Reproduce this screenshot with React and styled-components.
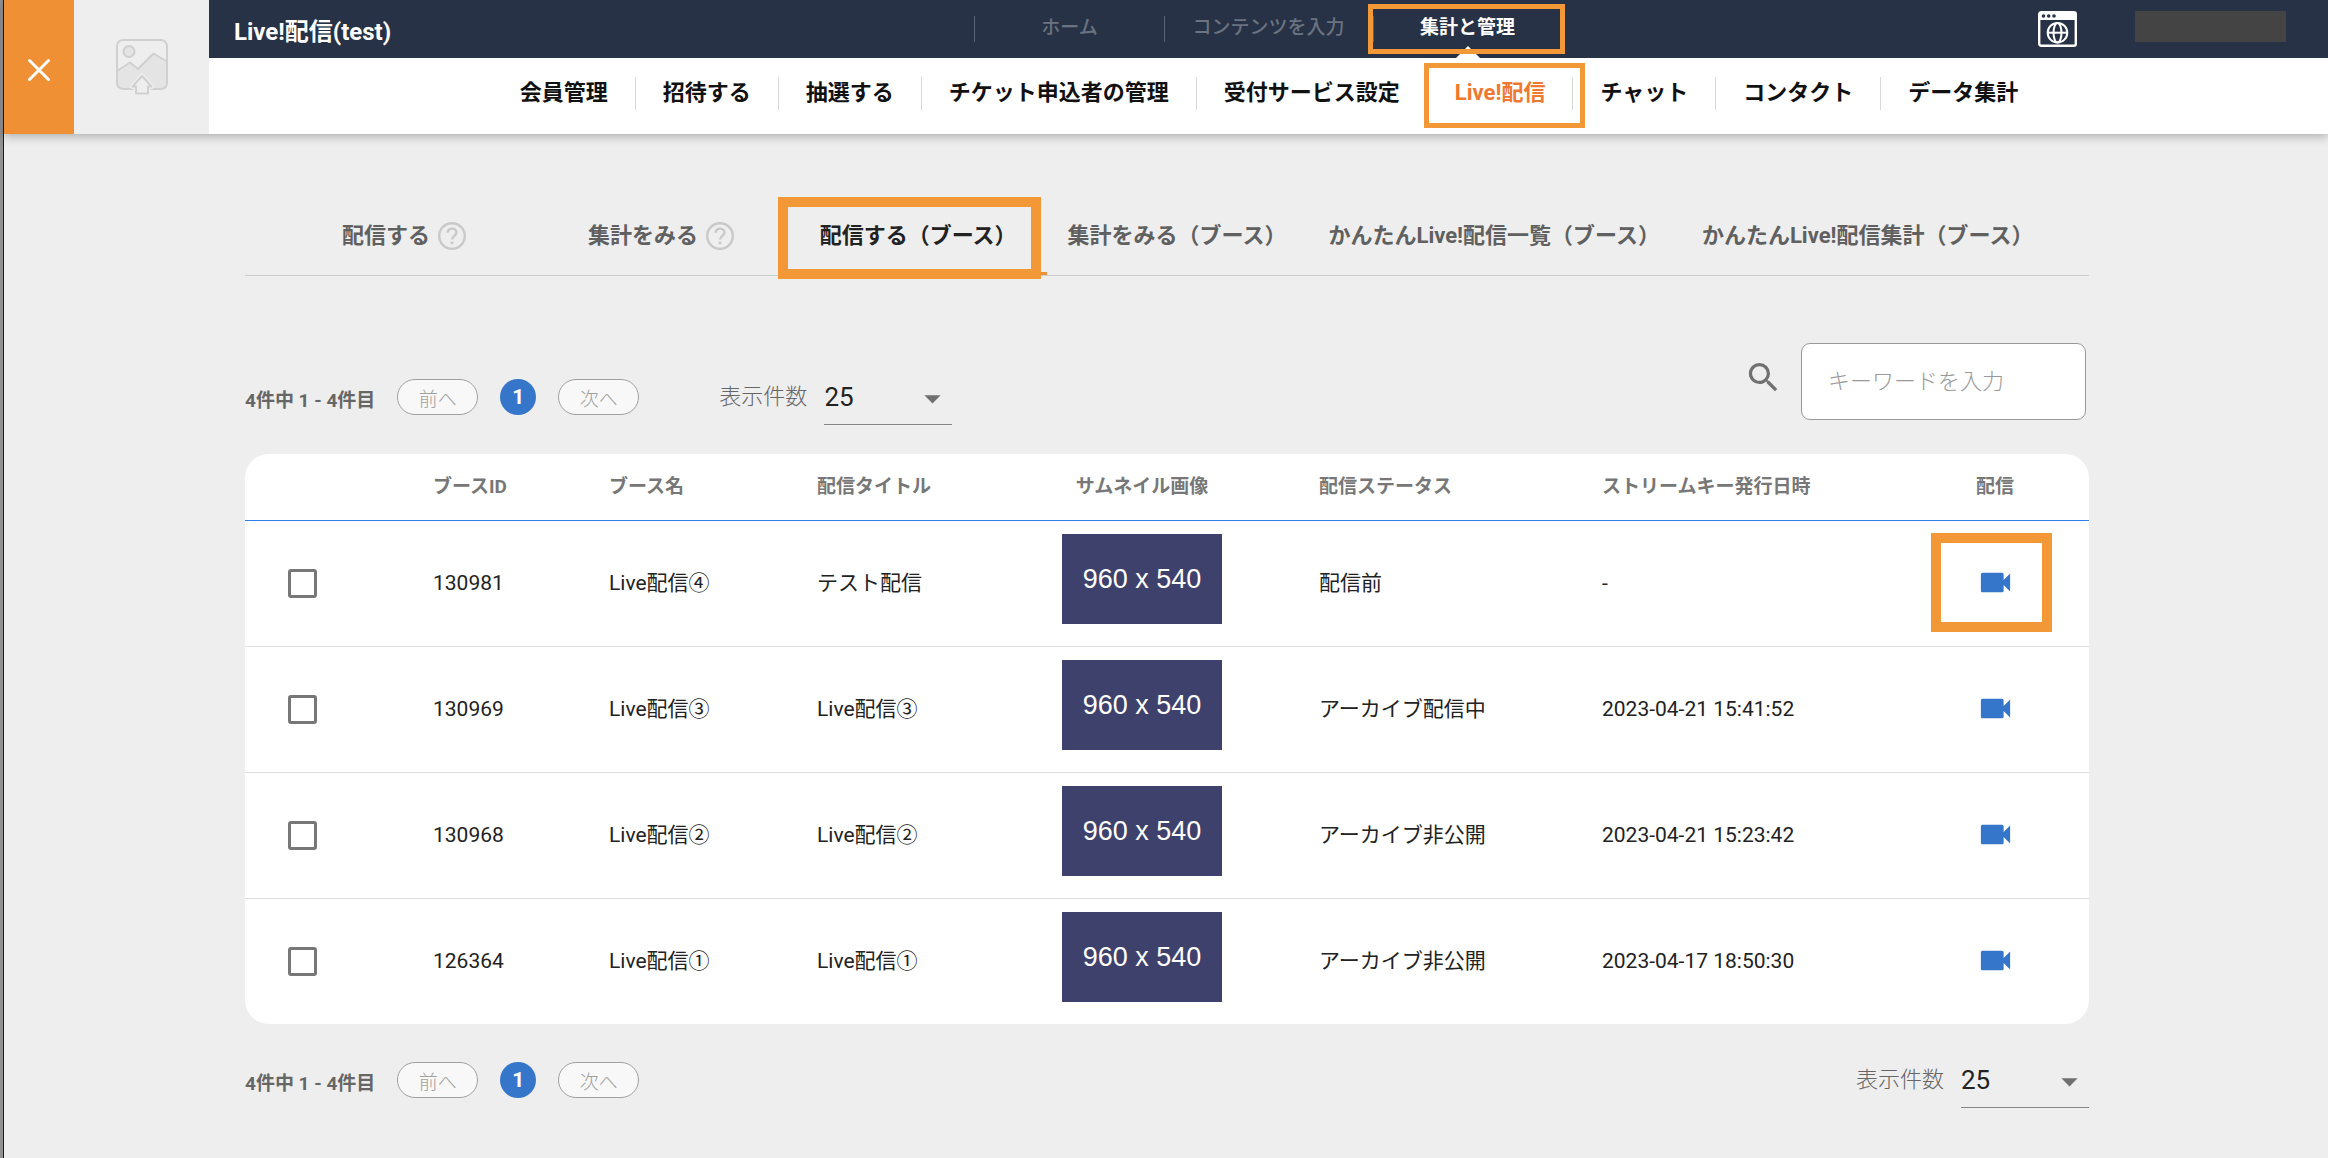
import React from 'react'
import { useState } from 'react'
import styled, { createGlobalStyle } from 'styled-components'
import { MdArrowDropDown, MdSearch, MdVideocam } from 'react-icons/md'

const GlobalStyle = createGlobalStyle`
  * {
    box-sizing: border-box;
  }

  body {
    margin: 0;
    background: #eeeeee;
    color: #222222;
    font-family: Roboto, "Noto Sans CJK JP", sans-serif;
    font-size: 21px;
    line-height: 30px;
  }

  button, input, select {
    font-family: inherit;
  }

  a {
    color: inherit;
    text-decoration: none;
  }
`

const Page = styled.div`
  min-height: 100vh;
  border-left: 3px solid #929292;
`

const Inner = styled.div`
  min-height: 100vh;
  border-left: 1px solid #1c1c1c;
`

const Header = styled.header`
  display: flex;
  height: 134px;
  background: #ffffff;
  box-shadow: 0 2px 10px rgba(0, 0, 0, 0.3);
`

const CloseButton = styled.button`
  display: flex;
  align-items: center;
  justify-content: center;
  width: 70px;
  padding: 6px 0 0;
  border: 0;
  background: #f09035;
`

const Logo = styled.div`
  display: flex;
  align-items: center;
  justify-content: center;
  width: 135px;
  background: #eeeeee;
`

const Bars = styled.div`
  flex: 1;
`

const TopBar = styled.div`
  display: grid;
  grid-template-columns: 1fr auto 1fr;
  grid-template-rows: 58px;
  background: #273246;
`

const Title = styled.h1`
  margin: 0;
  padding: 6px 0 0 25px;
  color: #ffffff;
  font-size: 24px;
  font-weight: 700;
  line-height: 52px;
`

const TopNav = styled.nav`
  display: flex;
`

const TopLink = styled.a`
  position: relative;
  display: flex;
  justify-content: center;
  min-width: 190px;
  padding: 0 28px;
  color: ${(p) => (p.$active ? '#ffffff' : '#6b7280')};
  font-size: 19px;
  font-weight: ${(p) => (p.$active ? 700 : 500)};
  line-height: 55px;

  &::before {
    content: '';
    position: absolute;
    left: 0;
    top: 16px;
    width: 1px;
    height: 26px;
    background: #5b6474;
  }

  &::after {
    content: '';
    display: ${(p) => (p.$active ? 'block' : 'none')};
    position: absolute;
    left: calc(50% - 12px);
    bottom: 0;
    border: 12px solid transparent;
    border-top: 0;
    border-bottom-color: #ffffff;
  }
`

const TopRight = styled.div`
  display: flex;
  align-items: flex-start;
  justify-content: flex-end;
  gap: 58px;
  padding: 11px 42px 0 0;
`

const SiteLink = styled.a`
  display: block;
  height: 36px;
`

const Account = styled.div`
  width: 151px;
  height: 31px;
  background: #444444;
`

const SubNav = styled.nav`
  display: flex;
  justify-content: center;
  padding-top: 19px;
`

const SubLink = styled.a`
  position: relative;
  padding: 0 27px 2px;
  border-left: 1px solid #d8d8d8;
  color: ${(p) => (p.$active ? '#f07830' : '#111111')};
  font-size: 22px;
  font-weight: 700;
  line-height: 31px;
  white-space: nowrap;

  &:first-child {
    border-left-color: transparent;
  }
`

// orange frame laid over the control that the guide points at
const Frame = styled.span`
  position: absolute;
  z-index: 1;
  inset: ${(p) => p.$inset};
  border: ${(p) => p.$width}px solid #f29837;
  pointer-events: none;
`

const Main = styled.main`
  padding: 63px 239px 48px 241px;
`

const Tabs = styled.nav`
  display: flex;
  justify-content: center;
  padding-right: 4px;
  border-bottom: 1px solid #cccccc;
`

const Tab = styled.a`
  position: relative;
  display: flex;
  align-items: center;
  justify-content: center;
  gap: 8px;
  min-width: 257px;
  height: 78px;
  padding: 2px 21px 0;
  border-bottom: 3px solid ${(p) => (p.$active ? '#f09035' : 'transparent')};
  color: ${(p) => (p.$active ? '#222222' : '#606060')};
  font-size: 22px;
  font-weight: 700;
  white-space: nowrap;
`

const Toolbar = styled.div`
  display: flex;
  justify-content: space-between;
  align-items: flex-end;
  min-height: 82px;
  margin: 67px 0 29px;
`

const Group = styled.div`
  display: flex;
  align-items: center;
  gap: 80px;
  height: 56px;
`

const BottomBar = styled.div`
  display: flex;
  justify-content: space-between;
  margin-top: 28px;
`

const PagerBox = styled.div`
  display: flex;
  align-items: center;
  gap: 22px;
`

const Count = styled.span`
  padding-top: 7px;
  color: #666666;
  font-size: 19px;
  font-weight: 700;
`

const PageButton = styled.button`
  width: 81px;
  height: 36px;
  padding: 0;
  border: 1px solid #a0a0a0;
  border-radius: 18px;
  background: #f8f8f8;
  color: #a0a0a0;
  font-size: 19px;
  font-weight: 300;
`

const PageNumber = styled.button`
  width: 36px;
  height: 36px;
  padding: 0;
  border: 0;
  border-radius: 50%;
  background: #3576cb;
  color: #ffffff;
  font-size: 21px;
  font-weight: 700;
`

const SizeLabel = styled.label`
  display: flex;
  align-items: center;
  gap: 17px;
  height: 56px;
  color: #666666;
  font-size: 22px;
  font-weight: 300;
`

const SelectBox = styled.span`
  position: relative;
  display: block;
  width: 128px;
  height: 56px;
  border-bottom: 1px solid #858585;

  svg {
    position: absolute;
    right: 0;
    top: 10px;
    color: #707070;
    pointer-events: none;
  }
`

const Select = styled.select`
  appearance: none;
  width: 100%;
  height: 55px;
  padding: 0;
  border: 0;
  background: transparent;
  color: #222222;
  font-size: 26px;
`

const SearchBox = styled.label`
  display: flex;
  align-self: flex-start;
  align-items: center;
  gap: 18px;
  margin-right: 3px;
  color: #707070;

  svg {
    margin-bottom: 8px;
  }
`

const SearchInput = styled.input`
  width: 285px;
  height: 77px;
  padding: 0 26px;
  border: 1px solid #999999;
  border-radius: 9px;
  background: #ffffff;
  font-size: 22px;

  &::placeholder {
    color: #999999;
    font-weight: 300;
  }
`

const Table = styled.table`
  width: 100%;
  table-layout: fixed;
  border-collapse: separate;
  border-spacing: 0;
  border-radius: 24px;
  background: #ffffff;
`

const Th = styled.th`
  width: ${(p) => p.$width}px;
  height: 67px;
  padding: 0;
  border-bottom: 1px solid #2f80ed;
  color: #777777;
  font-size: 19px;
  font-weight: 700;
  text-align: ${(p) => (p.$center ? 'center' : 'left')};
  white-space: nowrap;
`

const Td = styled.td`
  height: 126px;
  padding: 0 0 2px;
  border-bottom: 1px solid #dedede;
  text-align: ${(p) => (p.$center ? 'center' : 'left')};
  white-space: nowrap;

  tr:last-child > & {
    height: 125px;
    border-bottom: 0;
  }
`

const CheckCell = styled(Td)`
  padding: 0 0 0 43px;
`

const Checkbox = styled.input`
  appearance: none;
  display: block;
  width: 29px;
  height: 29px;
  margin: 0;
  border: 3px solid #777777;
  border-radius: 3px;

  &:checked {
    background: #3576cb;
  }
`

const Thumb = styled.div`
  width: 160px;
  margin: 0 auto 7px;
  background: #3e416c;
  color: #ffffff;
  font-family: "Liberation Sans", sans-serif;
  font-size: 27px;
  line-height: 90px;
`

const VideoButton = styled.button`
  position: relative;
  display: flex;
  margin: 0 auto;
  padding: 0;
  border: 0;
  background: transparent;
  color: #3576cb;
`

const subLinks = [
  '会員管理',
  '招待する',
  '抽選する',
  'チケット申込者の管理',
  '受付サービス設定',
  'Live!配信',
  'チャット',
  'コンタクト',
  'データ集計',
]

const tabs = [
  { name: '配信する', help: true },
  { name: '集計をみる', help: true },
  { name: '配信する（ブース）', active: true },
  { name: '集計をみる（ブース）' },
  { name: 'かんたんLive!配信一覧（ブース）' },
  { name: 'かんたんLive!配信集計（ブース）' },
]

const booths = [
  { id: '130981', name: 'Live配信④', title: 'テスト配信', status: '配信前', date: '-', framed: true },
  { id: '130969', name: 'Live配信③', title: 'Live配信③', status: 'アーカイブ配信中', date: '2023-04-21 15:41:52' },
  { id: '130968', name: 'Live配信②', title: 'Live配信②', status: 'アーカイブ非公開', date: '2023-04-21 15:23:42' },
  { id: '126364', name: 'Live配信①', title: 'Live配信①', status: 'アーカイブ非公開', date: '2023-04-17 18:50:30' },
]

function CloseIcon() {
  return (
    <svg width="24" height="24" viewBox="0 0 24 24" fill="none" stroke="#ffffff" strokeWidth="3" strokeLinecap="round">
      <path d="M2.5 2.5l19 19M21.5 2.5l-19 19" />
    </svg>
  )
}

function UploadImageIcon() {
  return (
    <svg width="52" height="56" viewBox="0 0 52 56" fill="none" stroke="#d0d0d0" strokeWidth="2" strokeLinejoin="round">
      <path d="M1 32L14 23.5l8 6.500L37.500 14.500 51 22.500V44a6 6 0 0 1-6 6H7a6 6 0 0 1-6-6z" fill="#e4e4e4" stroke="none" />
      <rect x="1" y="1" width="50" height="49" rx="6" />
      <circle cx="13" cy="12.500" r="5.500" fill="#e4e4e4" />
      <path d="M1 32L14 23.500l8 6.500L37.500 14.500 51 22.500" />
      <path d="M26 37l-9.500 10.500H20V54.500h12V47.500h3.500z" fill="#eeeeee" stroke="#eeeeee" strokeWidth="5" />
      <path d="M26 37l-9.500 10.500H20V54.500h12V47.500h3.500z" fill="#eeeeee" />
    </svg>
  )
}

function SiteIcon() {
  return (
    <svg width="39" height="36" viewBox="0 0 39 36" fill="none" stroke="#ffffff" strokeWidth="2">
      <rect x="1.200" y="1.200" width="36.600" height="33.600" rx="2" strokeWidth="2.400" />
      <path d="M1 1h37v8H1z" fill="#ffffff" stroke="none" />
      <g fill="#273246" stroke="none">
        <circle cx="5.500" cy="5" r="1.800" />
        <circle cx="10.700" cy="5" r="1.800" />
        <circle cx="16" cy="5" r="1.800" />
      </g>
      <circle cx="19.500" cy="21.700" r="9.800" />
      <ellipse cx="19.500" cy="21.700" rx="4" ry="9.800" />
      <path d="M9.700 21.700h19.600" />
    </svg>
  )
}

function HelpIcon() {
  return (
    <svg width="28" height="28" viewBox="0 0 28 28" fill="none" stroke="#c9c9c9" strokeWidth="2">
      <circle cx="14" cy="14" r="12.800" strokeWidth="2.400" />
      <path d="M9.700 10.800c0-2.600 1.900-4.200 4.400-4.200s4.300 1.600 4.300 3.900c0 3.200-4.300 3.500-4.300 7" strokeWidth="2.400" />
      <path d="M14 19.600v2.600" strokeWidth="2.800" />
    </svg>
  )
}

function Pager() {
  return (
    <PagerBox>
      <Count>4件中 1 - 4件目</Count>
      <PageButton type="button" disabled>前へ</PageButton>
      <PageNumber type="button">1</PageNumber>
      <PageButton type="button" disabled>次へ</PageButton>
    </PagerBox>
  )
}

function PageSize({ value, onChange }) {
  return (
    <SizeLabel>
      表示件数
      <SelectBox>
        <Select value={value} onChange={(e) => onChange(e.target.value)}>
          <option>25</option>
          <option>50</option>
          <option>100</option>
        </Select>
        <MdArrowDropDown size={39} />
      </SelectBox>
    </SizeLabel>
  )
}

function App() {
  const [size, setSize] = useState('25')
  const [keyword, setKeyword] = useState('')

  return (
    <Page>
      <GlobalStyle />
      <Inner>
        <Header>
          <CloseButton type="button" aria-label="閉じる">
            <CloseIcon />
          </CloseButton>
          <Logo>
            <UploadImageIcon />
          </Logo>
          <Bars>
            <TopBar>
              <Title>Live!配信(test)</Title>
              <TopNav>
                <TopLink href="#home">ホーム</TopLink>
                <TopLink href="#contents">コンテンツを入力</TopLink>
                <TopLink href="#manage" $active>
                  集計と管理
                  <Frame $inset="4px -2px 4px -5px" $width={5} />
                </TopLink>
              </TopNav>
              <TopRight>
                <SiteLink href="#site" aria-label="サイト">
                  <SiteIcon />
                </SiteLink>
                <Account />
              </TopRight>
            </TopBar>
            <SubNav>
              {subLinks.map((name) => (
                <SubLink key={name} href="#manage" $active={name === 'Live!配信'}>
                  {name}
                  {name === 'Live!配信' && <Frame $inset="-14px -13px -18px -4px" $width={5} />}
                </SubLink>
              ))}
            </SubNav>
          </Bars>
        </Header>

        <Main>
          <Tabs>
            {tabs.map((tab) => (
              <Tab key={tab.name} href="#live" $active={tab.active}>
                {tab.name}
                {tab.help && <HelpIcon />}
                {tab.active && <Frame $inset="0 6px -7px -12px" $width={10} />}
              </Tab>
            ))}
          </Tabs>

          <Toolbar>
            <Group>
              <Pager />
              <PageSize value={size} onChange={setSize} />
            </Group>
            <SearchBox>
              <MdSearch size={39} />
              <SearchInput
                type="text"
                aria-label="キーワード"
                placeholder="キーワードを入力"
                value={keyword}
                onChange={(e) => setKeyword(e.target.value)}
              />
            </SearchBox>
          </Toolbar>

          <Table>
            <thead>
              <tr>
                <Th $width={188} />
                <Th $width={176}>ブースID</Th>
                <Th $width={208}>ブース名</Th>
                <Th $width={148}>配信タイトル</Th>
                <Th $width={354} $center>サムネイル画像</Th>
                <Th $width={283}>配信ステータス</Th>
                <Th $width={299}>ストリームキー発行日時</Th>
                <Th $width={188} $center>配信</Th>
              </tr>
            </thead>
            <tbody>
              {booths.map((booth) => (
                <tr key={booth.id}>
                  <CheckCell>
                    <Checkbox type="checkbox" aria-label={booth.name} />
                  </CheckCell>
                  <Td>{booth.id}</Td>
                  <Td>{booth.name}</Td>
                  <Td>{booth.title}</Td>
                  <Td $center>
                    <Thumb>960 x 540</Thumb>
                  </Td>
                  <Td>{booth.status}</Td>
                  <Td>{booth.date}</Td>
                  <Td $center>
                    <VideoButton type="button" aria-label="配信">
                      <MdVideocam size={39} />
                      {booth.framed && <Frame $inset="-30px -37px -30px -45px" $width={10} />}
                    </VideoButton>
                  </Td>
                </tr>
              ))}
            </tbody>
          </Table>

          <BottomBar>
            <Pager />
            <PageSize value={size} onChange={setSize} />
          </BottomBar>
        </Main>
      </Inner>
    </Page>
  )
}

export default App
